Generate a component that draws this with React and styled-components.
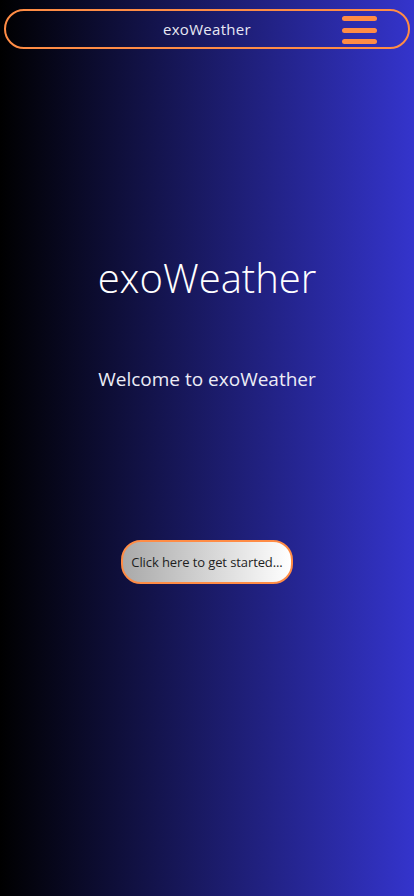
import React from 'react';
import styled, { createGlobalStyle } from 'styled-components';

const GlobalStyle = createGlobalStyle`
  html, body {
    margin: 0;
    padding: 0;
  }

  body {
    font-family: "Open Sans", "DejaVu Sans", sans-serif;
    background: linear-gradient(to right, #000000 0%, #3434cc 100%);
    min-height: 896px;
  }
`;

const Page = styled.div`
  min-height: 896px;
  display: flex;
  flex-direction: column;
  color: #ffffff;
`;

const NavBar = styled.header`
  margin: 9px 4px 0 4px;
  height: 36px;
  border: 2px solid #ff8c45;
  border-radius: 20px;
  display: flex;
  align-items: center;
  justify-content: center;
  position: relative;
`;

const NavTitle = styled.span`
  font-size: 15px;
  color: #e8e8f4;
  letter-spacing: 0.3px;
`;

const MenuButton = styled.button`
  position: absolute;
  right: 31px;
  top: 5px;
  width: 35px;
  height: 28px;
  padding: 0;
  border: none;
  background: none;
  display: flex;
  flex-direction: column;
  justify-content: space-between;
  cursor: pointer;
`;

const MenuBar = styled.span`
  display: block;
  height: 5px;
  border-radius: 3px;
  background: #ff8c45;
`;

const Hero = styled.main`
  display: flex;
  flex-direction: column;
  align-items: center;
  padding-top: 205px;
`;

const Title = styled.h1`
  margin: 0;
  font-size: 40px;
  font-weight: 300;
  line-height: 48px;
  color: #ffffff;
`;

const Subtitle = styled.p`
  margin: 64px 0 0 0;
  font-size: 19px;
  font-weight: 400;
  line-height: 26px;
  color: #ececf6;
`;

const StartButton = styled.button`
  margin-top: 148px;
  width: 172px;
  height: 44px;
  padding: 0;
  border: 2px solid #ff8c45;
  border-radius: 20px;
  background: linear-gradient(to right, #a9a9a9 0%, #ffffff 100%);
  font-family: inherit;
  font-size: 13px;
  letter-spacing: -0.1px;
  white-space: nowrap;
  color: #1e1e1e;
  cursor: pointer;
`;

export default function App() {
  return (
    <>
      <GlobalStyle />
      <Page>
        <NavBar>
          <NavTitle>exoWeather</NavTitle>
          <MenuButton aria-label="menu">
            <MenuBar />
            <MenuBar />
            <MenuBar />
          </MenuButton>
        </NavBar>
        <Hero>
          <Title>exoWeather</Title>
          <Subtitle>Welcome to exoWeather</Subtitle>
          <StartButton>Click here to get started...</StartButton>
        </Hero>
      </Page>
    </>
  );
}
